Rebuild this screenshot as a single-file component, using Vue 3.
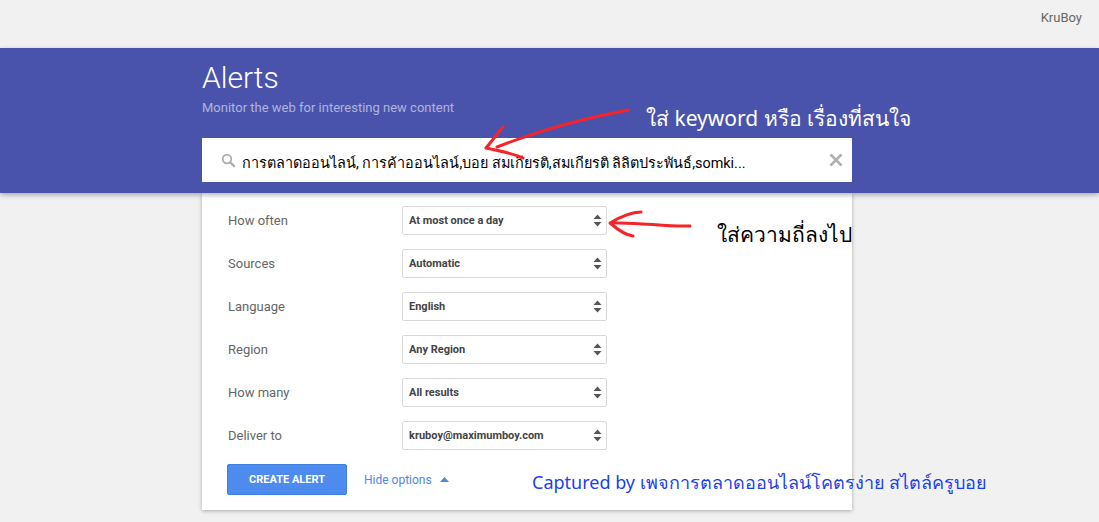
<script setup>
const rows = [
  { label: 'How often', value: 'At most once a day' },
  { label: 'Sources', value: 'Automatic' },
  { label: 'Language', value: 'English' },
  { label: 'Region', value: 'Any Region' },
  { label: 'How many', value: 'All results' },
  { label: 'Deliver to', value: 'kruboy@maximumboy.com' },
]
</script>

<template>
  <div class="page">
    <div class="topbar"><span class="user">KruBoy</span></div>
    <header class="hero">
      <div class="hero-inner">
        <h1 class="title">Alerts</h1>
        <p class="sub">Monitor the web for interesting new content</p>
        <div class="search">
          <svg class="search-icon" width="15" height="15" viewBox="0 0 15 15">
            <circle cx="6" cy="6" r="4.3" fill="none" stroke="#aaa" stroke-width="1.7" />
            <path d="M9.2 9.2 L13.8 13.8" stroke="#aaa" stroke-width="2.2" />
          </svg>
          <span class="query">การตลาดออนไลน์, การค้าออนไลน์,บอย สมเกียรติ,สมเกียรติ ลิลิตประพันธ์,somki...</span>
          <svg class="close" width="14" height="14" viewBox="0 0 14 14">
            <path d="M1.5 1.5 L12.5 12.5 M12.5 1.5 L1.5 12.5" stroke="#b0b0b0" stroke-width="2.6" />
          </svg>
        </div>
      </div>
    </header>
    <main class="card">
      <div v-for="row in rows" :key="row.label" class="row">
        <span class="label">{{ row.label }}</span>
        <div class="select">
          <span>{{ row.value }}</span>
          <svg width="9" height="13" viewBox="0 0 9 13">
            <path d="M4.5 0.5 L8.5 5 L0.5 5 Z M0.5 8 L8.5 8 L4.5 12.5 Z" fill="#555" />
          </svg>
        </div>
      </div>
      <div class="actions">
        <button class="create">CREATE ALERT</button>
        <span class="hide">Hide options</span>
        <svg width="9" height="5" viewBox="0 0 9 5"><path d="M4.5 0 L9 5 L0 5 Z" fill="#4d87e8" /></svg>
      </div>
    </main>

    <svg class="ink" width="1099" height="522" viewBox="0 0 1099 522">
      <g fill="none" stroke="#f5232a" stroke-width="3" stroke-linecap="round" stroke-linejoin="round">
        <path d="M628 110 C585 118 540 130 497 147" />
        <path d="M503 127 C497 134 492 141 486 148 C501 151 515 154 523 158" />
        <path d="M690 226 C665 227 640 222 613 223" />
        <path d="M641 212 C630 212 620 217 610 223 C618 230 626 235 633 236" />
      </g>
    </svg>
    <span class="note note-keyword">ใส่ keyword หรือ เรื่องที่สนใจ</span>
    <span class="note note-freq">ใส่ความถี่ลงไป</span>
    <span class="note note-capture">Captured by เพจการตลาดออนไลน์โคตรง่าย สไตล์ครูบอย</span>
  </div>
</template>

<style scoped>
.page {
  position: relative;
  width: 1099px;
  height: 522px;
  overflow: hidden;
  background: #f1f1f1;
  font-family: Roboto, "Noto Sans", sans-serif;
}
.topbar {
  height: 48px;
  display: flex;
  justify-content: flex-end;
  align-items: center;
  padding-right: 17px;
  padding-bottom: 13px;
  box-sizing: border-box;
}
.user {
  font-size: 13px;
  color: #666;
}
.hero {
  position: relative;
  z-index: 2;
  height: 145px;
  background: #4a53ac;
  box-shadow: 0 2px 5px rgba(0, 0, 0, 0.3);
}
.hero-inner {
  width: 650px;
  margin-left: 202px;
}
.title {
  margin: 0;
  padding-top: 12px;
  font-size: 30px;
  line-height: 36px;
  font-weight: 300;
  color: #fff;
}
.sub {
  margin: 3px 0 0;
  font-size: 13px;
  line-height: 18px;
  color: #b0b4de;
}
.search {
  margin-top: 21px;
  height: 44px;
  background: #fff;
  display: flex;
  align-items: center;
  padding-left: 19px;
  padding-right: 9px;
}
.search-icon {
  flex: none;
}
.query {
  margin-left: 6px;
  padding-top: 4px;
  flex: 1;
  font-size: 14.4px;
  color: #000;
  white-space: nowrap;
  overflow: hidden;
}
.close {
  flex: none;
}
.card {
  position: relative;
  width: 650px;
  height: 317px;
  margin-left: 202px;
  background: #fff;
  box-shadow: 0 1px 4px rgba(0, 0, 0, 0.3);
  box-sizing: border-box;
  padding-top: 13px;
}
.row {
  display: flex;
  align-items: center;
  height: 29px;
  margin-bottom: 14px;
  padding-left: 26px;
}
.label {
  width: 174px;
  font-size: 13px;
  color: #666;
}
.select {
  width: 205px;
  height: 29px;
  box-sizing: border-box;
  border: 1px solid #d9d9d9;
  border-radius: 2px;
  display: flex;
  align-items: center;
  justify-content: space-between;
  padding: 0 4px 0 6px;
  font-size: 11px;
  font-weight: 700;
  color: #444;
}
.actions {
  display: flex;
  align-items: center;
  padding-left: 25px;
  margin-top: 1px;
}
.create {
  width: 120px;
  height: 31px;
  border: 1px solid #3f7fe0;
  border-radius: 2px;
  background: #4d8bef;
  color: #fff;
  font: 700 11px Roboto, sans-serif;
  padding: 0;
}
.hide {
  margin-left: 17px;
  margin-right: 8px;
  font-size: 12px;
  color: #4d87e8;
}
.ink {
  position: absolute;
  left: 0;
  top: 0;
  z-index: 3;
  pointer-events: none;
}
.note {
  position: absolute;
  z-index: 4;
  white-space: nowrap;
  font-family: "Noto Sans", "DejaVu Sans", sans-serif;
}
.note-keyword {
  left: 646px;
  top: 103px;
  font-size: 21px;
  line-height: 30px;
  color: #fff;
}
.note-freq {
  left: 717px;
  top: 219px;
  font-size: 21px;
  line-height: 30px;
  color: #000;
}
.note-capture {
  left: 532px;
  top: 470px;
  font-size: 18px;
  line-height: 24px;
  color: #1a3ff0;
}
</style>
